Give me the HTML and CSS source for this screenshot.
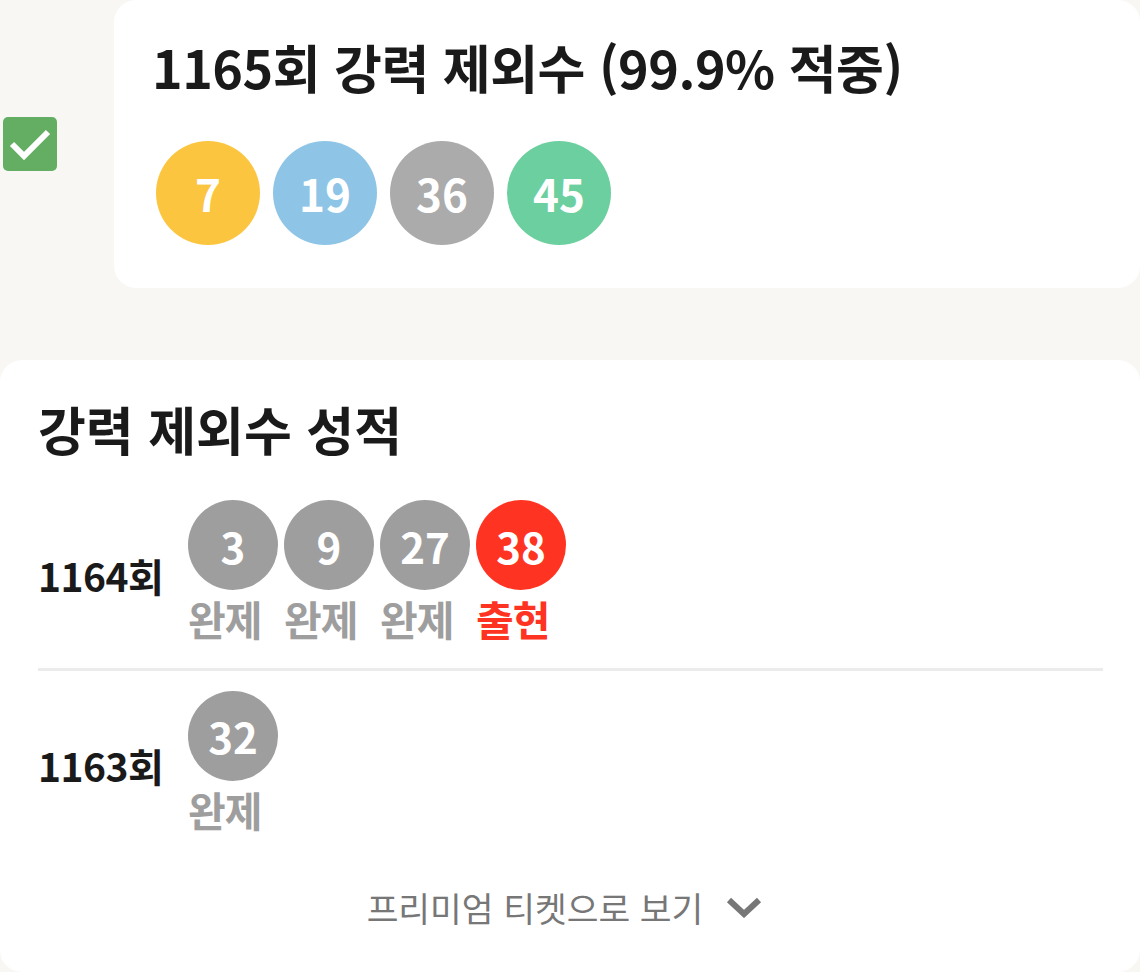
FILE: index.html
```html
<!DOCTYPE html>
<html lang="ko">
<head>
    <meta charset="UTF-8">
    <meta name="viewport" content="width=device-width, initial-scale=1.0">
    <title>강력 제외수</title>
    <link rel="stylesheet" href="styles.css">
</head>
<body>
    <div class="pick-row">
        <div class="check-box">
            <svg width="54" height="54" viewBox="0 0 54 54">
                <rect x="0" y="0" width="54" height="54" rx="5" fill="#63ae63"/>
                <polyline points="9,27 21,39 45,15" fill="none" stroke="#fff" stroke-width="6"/>
            </svg>
        </div>
        <div class="card pick-card">
            <h2 class="pick-title">1165회 강력 제외수 (99.9% 적중)</h2>
            <div class="ball-list">
                <span class="ball ball-yellow">7</span>
                <span class="ball ball-blue">19</span>
                <span class="ball ball-gray">36</span>
                <span class="ball ball-green">45</span>
            </div>
        </div>
    </div>

    <div class="card record-card">
        <h2 class="record-title">강력 제외수 성적</h2>

        <div class="record-row">
            <div class="round">1164회</div>
            <div class="record-balls">
                <div class="record-item">
                    <span class="small-ball">3</span>
                    <span class="state">완제</span>
                </div>
                <div class="record-item">
                    <span class="small-ball">9</span>
                    <span class="state">완제</span>
                </div>
                <div class="record-item">
                    <span class="small-ball">27</span>
                    <span class="state">완제</span>
                </div>
                <div class="record-item hit">
                    <span class="small-ball">38</span>
                    <span class="state">출현</span>
                </div>
            </div>
        </div>

        <div class="record-row">
            <div class="round">1163회</div>
            <div class="record-balls">
                <div class="record-item">
                    <span class="small-ball">32</span>
                    <span class="state">완제</span>
                </div>
            </div>
        </div>

        <div class="more">
            <span>프리미엄 티켓으로 보기</span>
            <svg width="36" height="22" viewBox="0 0 36 22">
                <polyline points="3,4 18,18 33,4" fill="none" stroke="#777" stroke-width="6"/>
            </svg>
        </div>
    </div>
</body>
</html>
```

FILE: styles.css
```css
body {
    margin: 0;
    background-color: #f8f7f3;
    font-family: "Noto Sans CJK KR", "Noto Sans", sans-serif;
    color: #1a1a1a;
}
.card {
    background-color: #fff;
    border-radius: 22px;
    box-sizing: border-box;
}
.pick-row {
    display: flex;
    align-items: center;
    padding-left: 3px;
    gap: 57px;
}
.check-box {
    width: 54px;
    height: 54px;
}
.check-box svg {
    display: block;
}
.pick-card {
    flex: 1;
    height: 288px;
    padding: 36px 38px 0 38px;
}
.pick-title {
    margin: 0;
    font-size: 52px;
    line-height: 1.2;
    font-weight: bold;
    letter-spacing: -0.5px;
}
.ball-list {
    display: flex;
    gap: 13px;
    margin-top: 43px;
    padding-left: 4px;
}
.ball {
    width: 104px;
    height: 104px;
    border-radius: 50%;
    display: flex;
    align-items: center;
    justify-content: center;
    color: #fff;
    font-size: 44px;
    font-weight: bold;
}
.ball-yellow { background-color: #fcc53f; }
.ball-blue { background-color: #8ec5e7; }
.ball-gray { background-color: #ababab; }
.ball-green { background-color: #6ccf9f; }

.record-card {
    margin-top: 72px;
    padding: 38px 37px 40px 38px;
}
.record-title {
    margin: 0;
    font-size: 52px;
    line-height: 1.2;
    font-weight: bold;
}
.record-row {
    display: flex;
    align-items: center;
    padding: 40px 0 22px 0;
    border-bottom: 3px solid #ebebeb;
}
.record-row + .record-row {
    padding-top: 20px;
    border-bottom: none;
}
.round {
    width: 150px;
    font-size: 39px;
    font-weight: bold;
    letter-spacing: -0.5px;
    padding-top: 4px;
}
.record-balls {
    display: flex;
    gap: 6px;
}
.record-item {
    display: flex;
    flex-direction: column;
    align-items: flex-start;
    width: 90px;
}
.small-ball {
    width: 90px;
    height: 90px;
    border-radius: 50%;
    background-color: #9e9e9e;
    color: #fff;
    display: flex;
    align-items: center;
    justify-content: center;
    font-size: 42px;
    font-weight: bold;
}
.state {
    margin-top: 2px;
    font-size: 41px;
    line-height: 1.3;
    font-weight: bold;
    color: #9e9e9e;
    letter-spacing: -1px;
}
.hit .small-ball {
    background-color: #ff3322;
}
.hit .state {
    color: #ff3322;
}
.more {
    display: flex;
    justify-content: center;
    align-items: center;
    gap: 23px;
    padding-top: 24px;
    padding-right: 12px;
    font-size: 34.5px;
    color: #777;
}
.more svg {
    display: block;
}
```
